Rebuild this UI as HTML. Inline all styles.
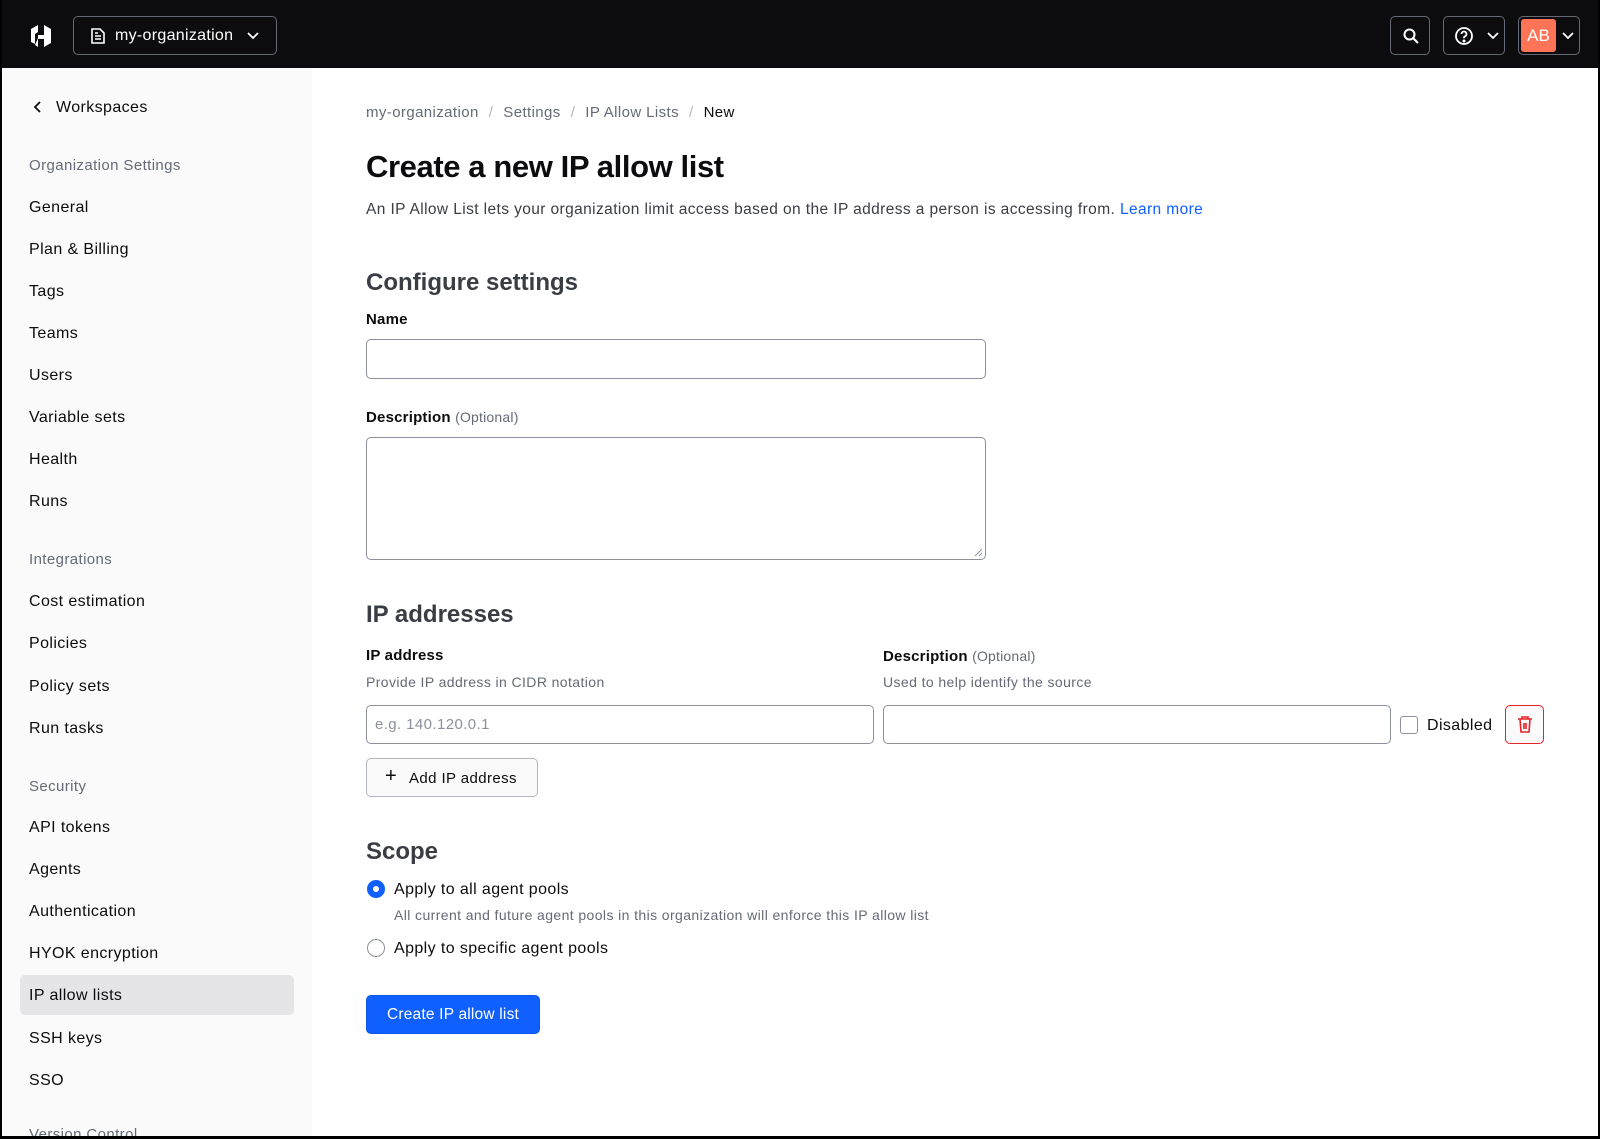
<!DOCTYPE html>
<html><head><meta charset="utf-8"><style>
*{box-sizing:border-box;margin:0;padding:0}
body{width:1600px;height:1139px;overflow:hidden;background:#000;font-family:"Liberation Sans",Arial,sans-serif;color:#0c0c0e;position:relative;letter-spacing:0.4px}
.page{position:absolute;left:2px;top:0;width:1596px;height:1136px;background:#fff;overflow:hidden}
.hdr{position:absolute;left:0;top:0;width:1596px;height:68px;background:#0c0c0e}
.hb{position:absolute;border:1px solid #656a76;border-radius:5px;top:16px;height:39px;color:#fff}
.side{position:absolute;left:0;top:68px;width:310px;height:1070px;background:#fafafa}
.si{position:absolute;left:27px;font-size:16px;color:#0c0c0e;line-height:20px}
.sh{position:absolute;left:27px;font-size:15px;color:#656a76;line-height:20px}
.a{position:absolute;line-height:20px}
.inp{position:absolute;border:1px solid #8c909c;border-radius:5px;background:#fff}
.lbl{font-size:15px;font-weight:bold;color:#0c0c0e;letter-spacing:0.2px}
.h2{font-size:24px;color:#3b3d45;font-weight:bold;letter-spacing:0}
.hint{font-size:14px;color:#656a76}
</style></head><body>
<div class="page">
<div class="hdr">
 <svg style="position:absolute;left:25px;top:22px" width="28" height="28" viewBox="0 0 28 28"><path d="M4 7 L11 3 V10 L8 12 V22 L4 20Z M11 13 H17 V17 H11Z M11 16 V25 L8 23" fill="#fff"/><path d="M24 7 L17 3 V25 L24 21Z" fill="#fff"/></svg>
 <div class="hb" style="left:71px;width:204px"><svg style="position:absolute;left:16px;top:10px" width="16" height="18" viewBox="0 0 16 18" fill="none" stroke="#fff" stroke-width="1.6"><path d="M2 2h8l4 4v10H2z M5 9h6 M5 12h6 M5 6h3"/></svg><span style="position:absolute;left:41px;top:10px;font-size:16px;letter-spacing:0.3px">my-organization</span><svg style="position:absolute;left:172px;top:14px" width="14" height="10"><path d="M2 2l5 5 5-5" stroke="#fff" stroke-width="1.8" fill="none"/></svg></div>
 <div class="hb" style="left:1388px;width:40px"><svg style="position:absolute;left:11px;top:10px" width="18" height="18" fill="none" stroke="#fff" stroke-width="2"><circle cx="7.5" cy="7.5" r="5"/><path d="M11 11l5 5"/></svg></div>
 <div class="hb" style="left:1441px;width:62px"><svg style="position:absolute;left:10px;top:9px" width="20" height="20" fill="none" stroke="#fff" stroke-width="1.8"><circle cx="10" cy="10" r="8"/><path d="M7.5 8a2.5 2.5 0 1 1 3.5 2.3c-.7.3-1 .8-1 1.5v.5"/><circle cx="10" cy="15" r=".6" fill="#fff"/></svg><svg style="position:absolute;left:42px;top:14px" width="14" height="10"><path d="M2 2l5 5 5-5" stroke="#fff" stroke-width="1.8" fill="none"/></svg></div>
 <div class="hb" style="left:1516px;width:62px"><div style="position:absolute;left:2px;top:2px;width:35px;height:33px;background:#ff7456;border-radius:3px;color:#fff;font-size:17px;text-align:center;line-height:33px;letter-spacing:0">AB</div><svg style="position:absolute;left:42px;top:14px" width="14" height="10"><path d="M2 2l5 5 5-5" stroke="#fff" stroke-width="1.8" fill="none"/></svg></div>
</div>
<div class="side">
 <svg style="position:absolute;left:31px;top:32px" width="10" height="14"><path d="M7 2L2 7l5 5" stroke="#0c0c0e" stroke-width="1.8" fill="none"/></svg>
 <div class="si" style="left:54px;top:30px">Workspaces</div>
 <div class="sh" style="top:88px">Organization Settings</div>
 <div class="si" style="top:130px">General</div>
 <div class="si" style="top:172px">Plan &amp; Billing</div>
 <div class="si" style="top:214px">Tags</div>
 <div class="si" style="top:256px">Teams</div>
 <div class="si" style="top:298px">Users</div>
 <div class="si" style="top:340px">Variable sets</div>
 <div class="si" style="top:382px">Health</div>
 <div class="si" style="top:424px">Runs</div>
 <div class="sh" style="top:482px">Integrations</div>
 <div class="si" style="top:524px">Cost estimation</div>
 <div class="si" style="top:566px">Policies</div>
 <div class="si" style="top:609px">Policy sets</div>
 <div class="si" style="top:651px">Run tasks</div>
 <div class="sh" style="top:709px">Security</div>
 <div class="si" style="top:750px">API tokens</div>
 <div class="si" style="top:792px">Agents</div>
 <div class="si" style="top:834px">Authentication</div>
 <div class="si" style="top:876px">HYOK encryption</div>
 <div style="position:absolute;left:18px;top:907px;width:274px;height:40px;background:#e5e5e7;border-radius:5px"></div>
 <div class="si" style="top:918px">IP allow lists</div>
 <div class="si" style="top:961px">SSH keys</div>
 <div class="si" style="top:1003px">SSO</div>
 <div class="sh" style="top:1057px">Version Control</div>
</div>
<div style="position:absolute;left:364px;top:103px;font-size:15px;color:#656a76;line-height:20px">my-organization<span style="margin:0 10px;color:#b2b6bd">/</span>Settings<span style="margin:0 10px;color:#b2b6bd">/</span>IP Allow Lists<span style="margin:0 10px;color:#b2b6bd">/</span><span style="color:#0c0c0e">New</span></div>
<div class="a" style="left:364px;top:149px;font-size:31px;font-weight:bold;line-height:36px;letter-spacing:-0.4px">Create a new IP allow list</div>
<div class="a" style="left:364px;top:200px;font-size:15.5px;color:#3b3d45">An IP Allow List lets your organization limit access based on the IP address a person is accessing from. <span style="color:#1060ff">Learn more</span></div>
<div class="a h2" style="left:364px;top:268px;line-height:30px">Configure settings</div>
<div class="a lbl" style="left:364px;top:310px">Name</div>
<div class="inp" style="left:364px;top:339px;width:620px;height:40px"></div>
<div class="a lbl" style="left:364px;top:407px">Description <span class="hint" style="font-weight:normal">(Optional)</span></div>
<div class="inp" style="left:364px;top:437px;width:620px;height:123px"><svg style="position:absolute;right:2px;bottom:2px" width="10" height="10" stroke="#8c909c"><path d="M9 2L2 9M9 6L6 9"/></svg></div>
<div class="a h2" style="left:364px;top:600px;line-height:30px">IP addresses</div>
<div class="a lbl" style="left:364px;top:646px">IP address</div>
<div class="a hint" style="left:364px;top:672px">Provide IP address in CIDR notation</div>
<div class="a lbl" style="left:881px;top:646px">Description <span class="hint" style="font-weight:normal">(Optional)</span></div>
<div class="a hint" style="left:881px;top:672px">Used to help identify the source</div>
<div class="inp" style="left:364px;top:705px;width:508px;height:39px"><span style="position:absolute;left:8px;top:10px;font-size:15px;color:#8c909c">e.g. 140.120.0.1</span></div>
<div class="inp" style="left:881px;top:705px;width:508px;height:39px"></div>
<div style="position:absolute;left:1398px;top:716px;width:18px;height:18px;border:1px solid #8c909c;border-radius:3px"></div>
<div class="a" style="left:1425px;top:716px;font-size:16px;font-weight:500">Disabled</div>
<div style="position:absolute;left:1503px;top:705px;width:39px;height:39px;border:1px solid #e52228;border-radius:5px;background:#fafafa"><svg style="position:absolute;left:10px;top:9px" width="18" height="20" fill="none" stroke="#e52228" stroke-width="1.6"><path d="M2 4h14M6 4V2h6v2M4 4l1 13h8l1-13M8 8v6M10 8v6"/></svg></div>
<div style="position:absolute;left:364px;top:758px;width:172px;height:39px;border:1px solid #b2b6bd;border-radius:5px;background:#fafafa;font-size:15px;line-height:37px"><span style="position:absolute;left:18px;font-size:20px;top:-1px">+</span><span style="position:absolute;left:42px;top:1px">Add IP address</span></div>
<div class="a h2" style="left:364px;top:837px;line-height:30px">Scope</div>
<div style="position:absolute;left:365px;top:880px;width:18px;height:18px;border-radius:50%;background:#1060ff"><div style="position:absolute;left:6px;top:6px;width:6px;height:6px;border-radius:50%;background:#fff"></div></div>
<div class="a" style="left:392px;top:880px;font-size:16px;font-weight:500">Apply to all agent pools</div>
<div class="a hint" style="left:392px;top:905px">All current and future agent pools in this organization will enforce this IP allow list</div>
<div style="position:absolute;left:365px;top:939px;width:18px;height:18px;border-radius:50%;border:1px solid #8c909c"></div>
<div class="a" style="left:392px;top:939px;font-size:16px;font-weight:500">Apply to specific agent pools</div>
<div style="position:absolute;left:364px;top:995px;width:174px;height:39px;background:#1060ff;border:1px solid #0c56e9;border-radius:5px;color:#fff;font-size:15.5px;text-align:center;line-height:38px;letter-spacing:0.2px">Create IP allow list</div>
</div>
</body></html>
